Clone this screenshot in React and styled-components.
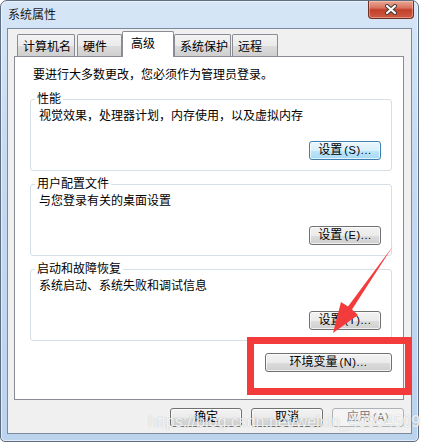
import React from 'react';
import styled, { createGlobalStyle } from 'styled-components';

const GlobalStyle = createGlobalStyle`
  html, body {
    margin: 0;
    padding: 0;
    background: #ffffff;
  }
  body {
    font-family: "Liberation Sans", "Noto Sans CJK SC", sans-serif;
    font-size: 12px;
    color: #000;
  }
`;

const Page = styled.div`
  position: relative;
  width: 429px;
  height: 446px;
  overflow: hidden;
`;

const Window = styled.div`
  width: 419px;
  height: 442px;
  box-sizing: border-box;
  border: 1px solid #5d6d82;
  border-radius: 7px 7px 5px 5px;
  background: linear-gradient(180deg, #d6e6f7 0%, #c6daf1 35%, #bcd3ee 100%);
  box-shadow: inset 0 0 0 1px rgba(255, 255, 255, 0.55);
  display: flex;
  flex-direction: column;
`;

const TitleBar = styled.div`
  height: 27px;
  display: flex;
  align-items: flex-start;
  justify-content: space-between;
  padding-left: 7px;
`;

const Title = styled.span`
  margin-top: 7px;
  font-size: 12px;
  line-height: 15px;
  color: #1a1a1a;
`;

const CloseButton = styled.div`
  width: 46px;
  height: 18px;
  box-sizing: border-box;
  margin-right: 4px;
  border: 1px solid #6e3026;
  border-top: none;
  border-radius: 0 0 4px 4px;
  background: linear-gradient(180deg, #eaa895 0%, #d9735e 40%, #c2402a 52%, #cf5a43 100%);
  box-shadow: inset 0 0 0 1px rgba(255, 210, 200, 0.45);
  display: flex;
  align-items: center;
  justify-content: center;
`;

const Client = styled.div`
  flex: 1;
  margin: 0 6px 7px;
  border: 1px solid #7b8a9c;
  background: #f0f0f0;
  display: flex;
  flex-direction: column;
  padding: 2px 7px 6px 6px;
`;

const TabStrip = styled.div`
  height: 25px;
  display: flex;
  align-items: flex-end;
  padding-left: 3px;
`;

const Tab = styled.div`
  position: relative;
  box-sizing: border-box;
  width: ${p => p.$w}px;
  height: ${p => (p.$active ? 26 : 22)}px;
  margin-right: ${p => p.$gap}px;
  margin-bottom: ${p => (p.$active ? -1 : 0)}px;
  z-index: ${p => (p.$active ? 1 : 0)};
  border: 1px solid #898c95;
  border-bottom: none;
  border-radius: 2px 2px 0 0;
  background: ${p =>
    p.$active ? '#ffffff' : 'linear-gradient(180deg, #f3f3f3 0%, #ebebeb 50%, #dddddd 50%, #cfcfcf 100%)'};
  padding-left: ${p => (p.$active ? 8 : 5)}px;
  padding-top: 4px;
  font-size: 12px;
  line-height: 16px;
  white-space: nowrap;
`;

const Panel = styled.div`
  height: 344px;
  box-sizing: border-box;
  border: 1px solid #898c95;
  background: #ffffff;
  display: flex;
  flex-direction: column;
  padding: 10px 11px 0 15px;
`;

const Intro = styled.div`
  padding-left: 3px;
  line-height: 16px;
  white-space: nowrap;
`;

const Group = styled.fieldset`
  margin: ${p => (p.$first ? 9 : 6)}px 0 0 0;
  padding: 0 10px 10px 8px;
  border: 1px solid #d5dfe5;
  border-radius: 3px;
  min-inline-size: auto;
  display: flex;
  flex-direction: column;
`;

const Legend = styled.legend`
  margin-left: -4px;
  padding: 0 2px;
  font-size: 12px;
  line-height: 14px;
`;

const Description = styled.div`
  padding-top: 2px;
  line-height: 16px;
  white-space: nowrap;
`;

const ButtonRow = styled.div`
  display: flex;
  justify-content: flex-end;
  margin-top: ${p => p.$top || 0}px;
`;

const Button = styled.div`
  box-sizing: border-box;
  width: ${p => p.$w || 72}px;
  height: 19px;
  border: 1px solid ${p => (p.$focus ? '#3c7fb1' : p.$disabled ? '#adb2b5' : '#707070')};
  border-radius: 3px;
  background: ${p =>
    p.$focus
      ? 'linear-gradient(180deg, #eaf6fd 0%, #d9f0fc 50%, #bee6fd 50%, #a7d9f5 100%)'
      : p.$disabled
      ? '#f4f4f4'
      : 'linear-gradient(180deg, #f2f2f2 0%, #ebebeb 50%, #dddddd 50%, #cfcfcf 100%)'};
  box-shadow: inset 0 0 0 1px ${p => (p.$disabled ? '#f4f4f4' : 'rgba(255, 255, 255, 0.7)')};
  color: ${p => (p.$disabled ? '#838383' : '#000')};
  display: flex;
  align-items: center;
  justify-content: center;
  font-size: 12px;
  line-height: 17px;
  white-space: nowrap;
`;

const Mnemonic = styled.span`
  margin-left: 2px;
  font-size: 11px;
  letter-spacing: 0.6px;
`;

const Footer = styled.div`
  display: flex;
  justify-content: flex-end;
  gap: 9px;
  margin-top: 8px;
`;

const Highlight = styled.div`
  position: absolute;
  left: 247px;
  top: 337px;
  width: 165px;
  height: 58px;
  box-sizing: border-box;
  border: 7px solid #f43b3b;
  pointer-events: none;
`;

const ArrowLayer = styled.svg`
  position: absolute;
  left: 0;
  top: 0;
  pointer-events: none;
`;

const Watermark = styled.div`
  position: absolute;
  left: 148px;
  top: 413px;
  font-family: "Liberation Sans", Arial, sans-serif;
  font-size: 16px;
  line-height: 18px;
  color: rgba(255, 255, 255, 0.85);
  text-shadow: 0 0 1px rgba(120, 120, 120, 0.5);
  white-space: nowrap;
  pointer-events: none;
`;

const tabs = [
  { label: '计算机名', w: 58, gap: 2 },
  { label: '硬件', w: 45, gap: 0 },
  { label: '高级', w: 52, gap: 0, active: true },
  { label: '系统保护', w: 57, gap: 1 },
  { label: '远程', w: 46, gap: 0 },
];

const groups = [
  { title: '性能', text: '视觉效果，处理器计划，内存使用，以及虚拟内存', key: 'S', focus: true },
  { title: '用户配置文件', text: '与您登录有关的桌面设置', key: 'E' },
  { title: '启动和故障恢复', text: '系统启动、系统失败和调试信息', key: 'T' },
];

const CloseIcon = () => (
  <svg width="14" height="11" viewBox="0 0 14 11">
    <path d="M3 2 L11 9 M11 2 L3 9" stroke="#3a3a3a" strokeWidth="4" strokeLinecap="round" />
    <path d="M3 2 L11 9 M11 2 L3 9" stroke="#ffffff" strokeWidth="2.2" strokeLinecap="round" />
  </svg>
);

const App = () => (
  <Page>
    <GlobalStyle />
    <Window>
      <TitleBar>
        <Title>系统属性</Title>
        <CloseButton>
          <CloseIcon />
        </CloseButton>
      </TitleBar>
      <Client>
        <TabStrip>
          {tabs.map(t => (
            <Tab key={t.label} $w={t.w} $gap={t.gap} $active={t.active}>
              {t.label}
            </Tab>
          ))}
        </TabStrip>
        <Panel>
          <Intro>要进行大多数更改，您必须作为管理员登录。</Intro>
          {groups.map((g, i) => (
            <Group key={g.title} $first={i === 0}>
              <Legend>{g.title}</Legend>
              <Description>{g.text}</Description>
              <ButtonRow $top={17}>
                <Button $focus={g.focus}>
                  设置<Mnemonic>({g.key})...</Mnemonic>
                </Button>
              </ButtonRow>
            </Group>
          ))}
          <ButtonRow $top={12}>
            <Button $w={127}>
              环境变量<Mnemonic>(N)...</Mnemonic>
            </Button>
          </ButtonRow>
        </Panel>
        <Footer>
          <Button>确定</Button>
          <Button>取消</Button>
          <Button $disabled>
            应用<Mnemonic>(A)</Mnemonic>
          </Button>
        </Footer>
      </Client>
    </Window>
    <Highlight />
    <ArrowLayer width="429" height="446" viewBox="0 0 429 446">
      <polygon
        points="393,246 352,309.5 358,315 333,333 341,302 348,306.5"
        fill="#f43b3b"
      />
    </ArrowLayer>
    <Watermark>https://blog.csdn.net/weixin_49954509</Watermark>
  </Page>
);

export default App;
